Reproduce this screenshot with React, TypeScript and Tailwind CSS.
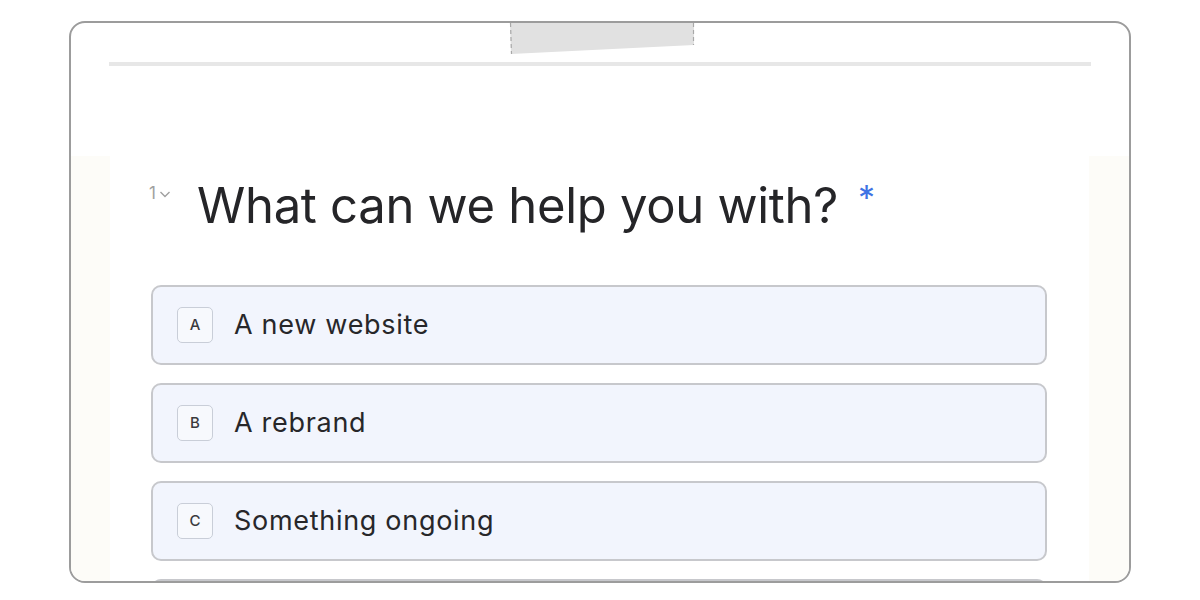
import React from "react";

const OPTIONS = [
  { key: "A", label: "A new website" },
  { key: "B", label: "A rebrand" },
  { key: "C", label: "Something ongoing" },
];

const Tape = () => (
  <svg
    className="absolute left-[437px] top-0"
    width="190"
    height="34"
    viewBox="0 0 190 34"
  >
    <polygon points="2,0 186,0 186,22 3,31" fill="#e1e1e1" />
    <line x1="2.5" y1="0" x2="3.5" y2="31" stroke="#a8a8a8" strokeWidth="1.2" strokeDasharray="4 3" />
    <line x1="185.5" y1="0" x2="185.5" y2="22" stroke="#a8a8a8" strokeWidth="1.2" strokeDasharray="4 3" />
  </svg>
);

export default function App() {
  return (
    <div
      className="w-[1200px] h-[600px] bg-white pt-[21px] pl-[69px]"
      style={{ fontFamily: "Inter, 'Noto Sans', sans-serif" }}
    >
      <div className="relative w-[1062px] h-[562px] border-2 border-[#9c9c9c] rounded-[16px] overflow-hidden bg-white flex flex-col">
        <Tape />
        <div className="pt-[39px] px-[38px] shrink-0">
          <div className="h-[4px] bg-[#e7e7e7]" />
        </div>
        <div className="flex-1 flex bg-[#fdfcf8] mt-[90px]">
          <div className="ml-[39px] w-[979px] bg-white flex flex-col">
            <div className="flex items-start pl-[39px] pt-[22px]">
              <div className="flex items-center text-[17px] text-[#a0a0a0] mt-[3px] w-[48px]">
                <span>1</span>
                <svg width="16" height="16" viewBox="0 0 16 16" className="ml-[1px]">
                  <path d="M3.5 6 L8 10.5 L12.5 6" fill="none" stroke="#a0a0a0" strokeWidth="1.4" />
                </svg>
              </div>
              <h1 className="text-[49px] leading-[56px] text-[#252528] tracking-[-0.3px] font-normal">
                What can we help you with?
              </h1>
              <span className="text-[34px] leading-[40px] text-[#3f73e4] ml-[20px]">*</span>
            </div>
            <div className="flex flex-col gap-[18px] pl-[41px] w-[937px] mt-[51px]">
              {OPTIONS.map((o) => (
                <div
                  key={o.key}
                  className="shrink-0 h-[80px] border-2 border-[#c7c8cc] rounded-[10px] bg-[#f2f5fd] flex items-center pl-[24px]"
                >
                  <div className="w-[36px] h-[36px] border border-[#c9ced8] rounded-[5px] bg-[#f7f9fd] flex items-center justify-center text-[15px] font-medium text-[#3a3a3d]">
                    {o.key}
                  </div>
                  <span className="ml-[21px] text-[27px] text-[#27272a] tracking-[0.7px]">
                    {o.label}
                  </span>
                </div>
              ))}
              {/* next option, only its top edge shows under the frame */}
              <div className="shrink-0 h-[80px] border-2 border-[#c7c8cc] rounded-[10px] bg-[#f2f5fd]" />
            </div>
          </div>
        </div>
      </div>
    </div>
  );
}
